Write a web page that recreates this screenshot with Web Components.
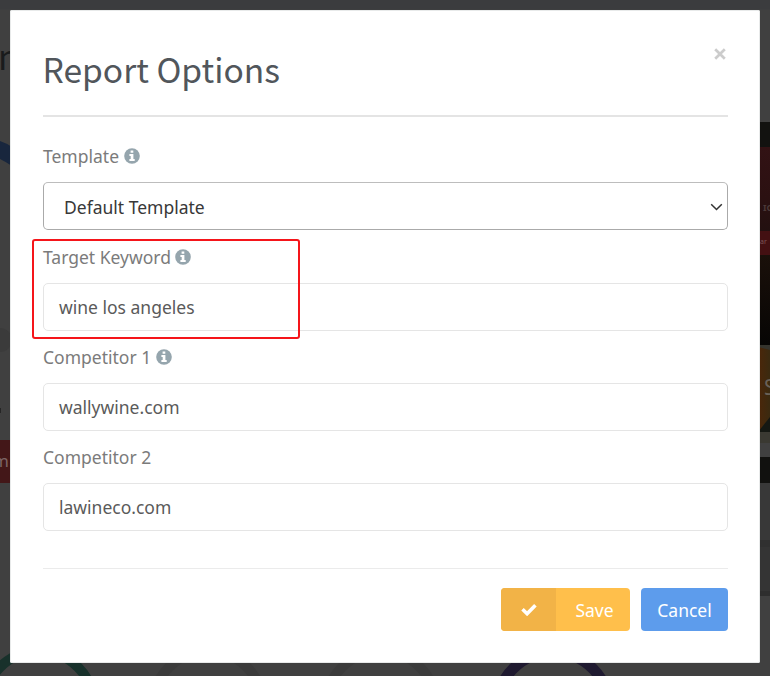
<!DOCTYPE html>
<html lang="en">
<head>
<meta charset="utf-8">
<title>Report Options</title>
<style>
body{margin:0;width:770px;height:676px;overflow:hidden;background:#404040;font-family:"Noto Sans","Open Sans",sans-serif;font-size:17.5px}
</style>
</head>
<body>
<dimmed-page></dimmed-page>
<report-dialog heading="Report Options">
  <form-field label="Template" info><select-box slot="control">Default Template</select-box></form-field>
  <form-field label="Target Keyword" info highlighted><text-box slot="control">wine los angeles</text-box></form-field>
  <form-field label="Competitor 1" info><text-box slot="control">wallywine.com</text-box></form-field>
  <form-field label="Competitor 2"><text-box slot="control">lawineco.com</text-box></form-field>
  <action-button slot="actions" kind="save">Save</action-button>
  <action-button slot="actions" kind="cancel">Cancel</action-button>
</report-dialog>
<script>
const define = (name, render) => customElements.define(name, class extends HTMLElement {
  connectedCallback() {
    if (!this.shadowRoot) this.attachShadow({mode: 'open'}).innerHTML = render(this);
  }
});

define('dimmed-page', () => `
<style>:host{position:absolute;inset:0;display:block}svg{display:block}</style>
<svg width="770" height="676" viewBox="0 0 770 676">
  <defs>
    <linearGradient id="g" x1="0" y1="0" x2="0" y2="1"><stop offset="0" stop-color="#1a100a"/><stop offset="1" stop-color="#060504"/></linearGradient>
    <linearGradient id="m" x1="0" y1="0" x2="0" y2="1"><stop offset="0" stop-color="#321214"/><stop offset=".6" stop-color="#2b1011"/><stop offset="1" stop-color="#221010"/></linearGradient>
    <linearGradient id="o" x1="0" y1="0" x2="1" y2="0"><stop offset="0" stop-color="#4c2609"/><stop offset="1" stop-color="#3a2a10"/></linearGradient>
  </defs>
  <rect width="770" height="676" fill="#404040"/>
  <rect width="770" height="9.500" fill="#3b3c3e"/>
  <text x="-2" y="70" font-family="Noto Sans CJK SC,sans-serif" font-size="34" fill="#191b1c">n</text>
  <path d="M0 141 Q6 143 12 147 V166 Q6 162 0 159Z" fill="#18263d"/>
  <circle cx="0" cy="340" r="12" fill="#3b3b3b"/>
  <rect x="0" y="408" width="1" height="5" fill="#252525"/>
  <rect x="0" y="440" width="12" height="43" fill="#431718"/>
  <text x="-7" y="467" font-size="17" fill="#7b6464">m</text>
  <circle cx="39" cy="706" r="55" fill="none" stroke="#18312b" stroke-width="10"/>
  <circle cx="208" cy="706" r="55" fill="none" stroke="#3b3b3b" stroke-width="10"/>
  <circle cx="381" cy="706" r="55" fill="none" stroke="#3b3b3b" stroke-width="10"/>
  <circle cx="553" cy="708" r="56" fill="none" stroke="#1f1a30" stroke-width="11"/>
  <rect x="758" y="122" width="12" height="25" fill="#121210"/>
  <rect x="758" y="147" width="12" height="84" fill="url(#m)"/>
  <text x="763" y="211" font-size="9" font-weight="700" fill="#4b3938">IC</text>
  <rect x="758" y="231" width="12" height="24" fill="#431012"/>
  <text x="760" y="244" font-size="7" fill="#7b5455">ar</text>
  <rect x="758" y="255" width="12" height="91" fill="url(#g)"/>
  <rect x="758" y="346" width="12" height="86" fill="url(#o)"/>
  <path d="M758 345 H770 V350 L758 347Z" fill="#35342d"/>
  <path d="M758 432 L770 417 V432Z" fill="#151813"/>
  <text x="764" y="395" font-size="21" fill="#696158">S</text>
  <rect x="758" y="432" width="12" height="11" fill="#3a3932"/>
  <rect x="758" y="457" width="12" height="26" fill="#11110f"/>
  <rect x="758" y="483" width="12" height="57" fill="#383838"/>
  <rect x="758" y="540" width="12" height="7" fill="#303030"/>
  <rect x="758" y="547" width="12" height="44" fill="#343434"/>
  <rect x="758" y="591" width="12" height="5" fill="#2e2e2e"/>
</svg>`);

define('close-icon', () => `
<style>:host{display:block;width:12px;height:12px}svg{display:block}</style>
<svg width="12" height="12" viewBox="0 0 12 12"><path d="M1.200 1.200 10.800 10.800M10.800 1.200 1.200 10.800" stroke="#ccc" stroke-width="2.700"/></svg>`);

define('info-icon', () => `
<style>:host{display:block;width:16px;height:16px}svg{display:block}</style>
<svg width="16" height="16" viewBox="0 0 16 16"><circle cx="8" cy="8" r="7.800" fill="#95a5ad"/><path d="M6.600 2.500h2.700v2.200H6.600zM5.400 6h4v5h1.300v2H5.400v-2h1.300V8H5.400z" fill="#fff"/></svg>`);

define('report-dialog', el => `
<style>
:host{position:absolute;left:10px;top:10px;width:750px;height:653px;box-sizing:border-box;display:flex;flex-direction:column;padding:0 32px 32px 33px;background:#fff;border-radius:2px;box-shadow:inset 0 0 0 1px #e8eaea}
header{display:flex;justify-content:space-between;height:105px;border-bottom:2px solid #e4e4e4;flex:none}
h1{margin:32px 0 0 -.500px;font:400 33.600px/54px "Noto Sans CJK SC",sans-serif;color:#51565b;white-space:nowrap}
close-icon{margin:38px 2px 0 0}
main{display:flex;flex-direction:column;padding-top:22.400px}
footer{margin-top:auto;display:flex;justify-content:flex-end;gap:11px;border-top:1px solid #ebebeb;padding-top:19px}
</style>
<header><h1>${el.getAttribute('heading')}</h1><close-icon></close-icon></header>
<main><slot></slot></main>
<footer><slot name="actions"></slot></footer>`);

define('form-field', el => `
<style>
:host{display:block;position:relative;height:100.330px}
.label{display:flex;align-items:center;gap:4.500px;box-sizing:border-box;height:33px;padding-top:1px;color:#7b7b7b;line-height:33px;white-space:nowrap}
:host(:not(:first-child)) .label{padding-top:2px}
:host(:not(:first-child)) info-icon{margin-top:-1px}
.ctl{padding-top:10px}
.mark{position:absolute;left:-11px;top:-1.100px;width:264px;height:96px;border:2px solid #f5151a;border-radius:3px}
</style>
<div class="label"><span>${el.getAttribute('label')}</span>${el.hasAttribute('info') ? '<info-icon></info-icon>' : ''}</div>
<div class="ctl"><slot name="control"></slot></div>
${el.hasAttribute('highlighted') ? '<div class="mark"></div>' : ''}`);

define('text-box', () => `
<style>:host{display:block;box-sizing:border-box;height:48px;border:1px solid #e5e5e5;border-radius:5px;padding:0 15px;line-height:47px;color:#5a5a5a}</style>
<slot></slot>`);

define('select-box', () => `
<style>:host{display:flex;justify-content:space-between;align-items:center;box-sizing:border-box;height:48px;border:1px solid #aaa;border-top-color:#bdbdbd;border-radius:5px;padding:1px 4px 0 20px;color:#383838}</style>
<span><slot></slot></span>
<svg width="13" height="8" viewBox="0 0 13 8"><path d="M1.200 1.200 6.500 6.500 11.800 1.200" fill="none" stroke="#333" stroke-width="1.500"/></svg>`);

define('action-button', el => {
  const save = el.getAttribute('kind') === 'save';
  return `
<style>
:host{display:flex;height:43px;width:${save ? 129 : 87}px;border-radius:4px;overflow:hidden;background:${save ? '#ffbf4b' : '#5d9cec'};color:#fff;line-height:44px}
.icon{width:55px;flex:none;background:#f2b347;display:flex;align-items:center;justify-content:center}
.text{flex:1;text-align:center;${save ? 'padding-left:3px' : ''}}
</style>
${save ? '<span class="icon"><svg width="16" height="13" viewBox="0 0 16 13"><path d="M1.500 6.300 6.100 10.700 14.400 2.200" fill="none" stroke="#fff" stroke-width="3.600"/></svg></span>' : ''}<span class="text"><slot></slot></span>`;
});
</script>
</body>
</html>
